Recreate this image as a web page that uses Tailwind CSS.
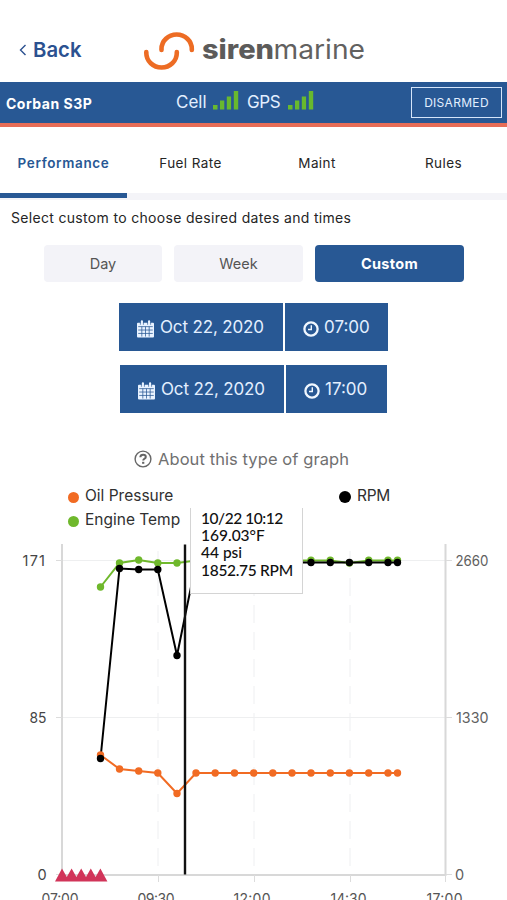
<!DOCTYPE html>
<html lang="en">
<head>
<meta charset="utf-8">
<title>Siren Marine</title>
<script src="https://cdn.jsdelivr.net/npm/@tailwindcss/browser@4"></script>
</head>
<body class="bg-white font-['Inter',sans-serif] overflow-hidden">
<svg class="hidden">
  <symbol id="cal" viewBox="0 0 18 19"><path fill="#e8f2ff" d="M1 3h3V1.5a1.2 1.2 0 0 1 2.4 0V3h5.2V1.5a1.2 1.2 0 0 1 2.4 0V3h3a1 1 0 0 1 1 1v13.500a1 1 0 0 1-1 1H1a1 1 0 0 1-1-1V4a1 1 0 0 1 1-1z"/><path stroke="#285894" stroke-width=".8" d="M1.300 7h15.400M1.300 10.600h15.400M1.300 14.200h15.400M5.100 7v10.500M9 7v10.500M12.900 7v10.500" fill="none"/><path stroke="#285894" stroke-width=".7" d="M3.600 2v3M6.800 2v3M11.200 2v3M14.400 2v3"/></symbol>
  <symbol id="clock" viewBox="0 0 16 16"><circle cx="8" cy="8" r="6.600" fill="none" stroke="#f0f7ff" stroke-width="2.300"/><path d="M8.300 4.200v4.300H5" fill="none" stroke="#f0f7ff" stroke-width="1.400"/></symbol>
  <symbol id="sig" viewBox="0 0 26 19"><path fill="#68b92e" d="M0 14h4.500v4.500H0zM7 9.500h4.300v9H7zM13.800 5.500h4.300v13h-4.300zM20.800 0h4.400v18.500h-4.400z"/></symbol>
</svg>
<div class="w-[507px] h-[900px] flex flex-col relative overflow-hidden">
  <header class="h-[82px] shrink-0 flex pl-[19px] text-[#2b5190]">
    <div class="w-[124px] flex items-center pt-[18px]">
      <svg class="w-[8px] h-[12px] mr-[6px]" viewBox="0 0 8 12" fill="none" stroke="#2b5190" stroke-width="1.400"><path d="M6.500 1 1.500 6l5 5"/></svg>
      <svg class="w-[52px] h-[28px]"><text x="0" y="21" font-size="20.500" font-weight="600" fill="#2b5190" textLength="48.500" lengthAdjust="spacingAndGlyphs">Back</text></svg>
    </div>
    <svg class="w-[230px] h-[82px]" viewBox="143 0 230 82">
      <g fill="none" stroke="#ed6c24" stroke-width="4.600" stroke-linecap="round"><path d="M146.300 52v1a15 14.300 0 0 0 30.500 0v-1"/><path d="M161.500 50v-1a15 14.300 0 0 1 30.300 0v1"/></g>
      <text x="202" y="58.500" font-size="26.500" font-weight="800" fill="#5c5b5a" textLength="72" lengthAdjust="spacingAndGlyphs">siren</text>
      <text x="273.500" y="58.500" font-size="26.500" font-weight="400" fill="#626160" textLength="91.500" lengthAdjust="spacingAndGlyphs">marine</text>
    </svg>
  </header>
  <div class="h-[45px] shrink-0 bg-[#285894] border-b-4 border-[#e76d57] flex items-center text-[#e3efff]">
    <div class="w-[176px] pl-[6px] pt-[1px] text-[14px] font-bold text-white tracking-[0.5px]">Corban S3P</div>
    <div class="w-[235px] flex items-center text-[17px]">
      <span class="w-[37px] pt-[1px]">Cell</span><svg class="w-[26px] h-[19px] -mt-[4px]"><use href="#sig"/></svg>
      <span class="w-[41px] ml-[8px] pt-[1px] tracking-[-0.4px]">GPS</span><svg class="w-[26px] h-[19px] -mt-[4px]"><use href="#sig"/></svg>
    </div>
    <div class="w-[91px] h-[31px] border border-[#d5e5fa] flex items-center justify-center text-[12px] tracking-[0.3px]">DISARMED</div>
  </div>
  <nav class="h-[73px] shrink-0 flex border-b-[7px] border-[#f4f4f8] text-[13.500px] text-[#252525] text-center leading-[72px] tracking-[0.4px]">
    <div class="w-[127px] h-[71px] border-b-[5px] border-[#285894] text-[#285894] font-semibold tracking-[0.65px]">Performance</div>
    <div class="w-[127px]">Fuel Rate</div>
    <div class="w-[126px]">Maint</div>
    <div class="w-[127px]">Rules</div>
  </nav>
  <p class="h-[45px] shrink-0 pl-[11px] leading-[35px] text-[14px] text-[#252525] tracking-[0.32px] whitespace-nowrap">Select custom to choose desired dates and times</p>
  <div class="shrink-0 flex gap-[12px] ml-[44px] h-[37px] text-[14.500px] leading-[37px] text-center text-[#555]">
    <div class="w-[118px] rounded bg-[#f3f3f8]">Day</div>
    <div class="w-[129px] rounded bg-[#f3f3f8]">Week</div>
    <div class="w-[149px] rounded bg-[#285894] text-white font-bold tracking-[0.3px]">Custom</div>
  </div>
  <div class="shrink-0 flex gap-[2px] ml-[119px] mt-[21px] h-[48px] text-[17px] text-[#e3efff] whitespace-nowrap">
    <div class="w-[164px] bg-[#285894] flex items-center pl-[18px] pt-[2px] tracking-[-0.15px]"><svg class="w-[17px] h-[18px] mr-[6px] mt-[2px]"><use href="#cal"/></svg>Oct 22, 2020</div>
    <div class="w-[103px] bg-[#285894] flex items-center pl-[18px] pt-[2px]"><svg class="w-[16px] h-[16px] mr-[5px] mt-[1px]"><use href="#clock"/></svg>07:00</div>
  </div>
  <div class="shrink-0 flex gap-[2px] ml-[120px] mt-[14px] h-[48px] text-[17px] text-[#e3efff] whitespace-nowrap">
    <div class="w-[164px] bg-[#285894] flex items-center pl-[18px] pt-[2px] tracking-[-0.15px]"><svg class="w-[17px] h-[18px] mr-[6px] mt-[2px]"><use href="#cal"/></svg>Oct 22, 2020</div>
    <div class="w-[101px] bg-[#285894] flex items-center pl-[18px] pt-[2px]"><svg class="w-[16px] h-[16px] mr-[5px] mt-[1px]"><use href="#clock"/></svg>17:00</div>
  </div>
  <div class="shrink-0 flex items-center h-[30px] mt-[31px] pl-[134px] text-[16.500px] text-[#707070] tracking-[0.08px] whitespace-nowrap">
    <svg class="w-[18px] h-[18px] mr-[6px]" viewBox="0 0 18 18" fill="none" stroke="#666"><circle cx="9" cy="9" r="7.900" stroke-width="1.400"/><path d="M6.300 7.200c.2-3.400 5.500-3.100 5.500-.3 0 1.800-2.600 2-2.600 3.600" stroke-width="2"/><path d="M8.100 12.800h2.200" stroke-width="2"/></svg>About this type of graph
  </div>
  <div class="shrink-0 h-[58px] pt-[10px] flex pl-[68px] text-[15.500px] leading-[24px] text-[#303030] whitespace-nowrap">
    <div class="w-[271px]">
      <div class="flex items-center"><span class="w-[11px] h-[11px] rounded-full bg-[#f16b23] mr-[6px] mt-[2px]"></span>Oil Pressure</div>
      <div class="flex items-center"><span class="w-[11px] h-[11px] rounded-full bg-[#6fb82c] mr-[6px] mt-[2px]"></span>Engine Temp</div>
    </div>
    <div class="flex items-center h-[24px]"><span class="w-[12px] h-[12px] rounded-full bg-black mr-[6px] mt-[2px]"></span><span class="tracking-[-0.3px]">RPM</span></div>
  </div>
  <svg class="shrink-0 w-[507px] h-[368px]" viewBox="0 532 507 368" fill="none">
    <path stroke="#eeeff0" d="M62 560.500h384M62 717.500h384"/>
    <path stroke="#eeeff1" stroke-dasharray="18 9" d="M158 551v323M254 551v323M350 551v323"/>
    <path stroke="#d8d8d8" stroke-width="2" d="M62 544v332M445.500 544v332M62 875h384"/>
    <path stroke="#dcdcdc" d="M56 560.500h6M56 717.500h6M56 874.500h6M446 560.500h6M446 717.500h6M446 874.500h6M158.500 875v7M254.500 875v7M350.500 875v7M445.500 875v7"/>
    <g stroke-width="2">
      <path stroke="#f16b23" d="M100.500 755 119.500 769 138.700 771 157.800 773 177 793.500 196 773 397.500 773"/>
      <path stroke="#6fb82c" d="M100.500 587 119.500 563 138.700 560 157.800 563 177 563 196 560.500 330 560.500 349.500 563 368.700 560.500 397.500 560.500"/>
      <path stroke="#000" d="M100.500 758.500 119.500 568.500 138.700 569.500 157.800 569.500 177 655.500 196 562.500 397.500 562.500"/>
    </g>
    <g stroke-width="7.400" stroke-linecap="round">
      <path stroke="#f16b23" d="M100.500 755h0M119.500 769h0M138.700 771h0M157.800 773h0M177 793.500h0M196 773h0M215.200 773h0M234.500 773h0M253.700 773h0M272.800 773h0M292 773h0M311 773h0M330.300 773h0M349.400 773h0M368.700 773h0M388 773h0M397.500 773h0"/>
      <path stroke="#6fb82c" d="M100.500 587h0M119.500 563h0M138.700 560h0M157.800 563h0M177 563h0M311 560.300h0M330.300 560.300h0M349.400 563h0M368.700 560.300h0M388 560.300h0M397.500 560.300h0"/>
      <path stroke="#000" d="M100.500 758.500h0M119.500 568.500h0M138.700 569.500h0M157.800 569.500h0M177 655.500h0M311 562.500h0M330.300 562.500h0M349.400 562.500h0M368.700 562.500h0M388 562.500h0M397.500 562.500h0"/>
    </g>
    <path stroke="#111" stroke-width="2.400" d="M185 544.500v330"/>
    <path fill="#d13459" d="m55 881.500 7-13 4.800 8.500 4.800-8.500 4.800 8.500 4.800-8.500 4.800 8.500 4.800-8.500 4.800 8.500 4.800-8.500 7 13z"/>
    <g font-size="14.500" fill="#454545">
      <text x="22.500" y="565.500" textLength="22.500">171</text><text x="29.500" y="722.500" textLength="17" lengthAdjust="spacingAndGlyphs">85</text><text x="37.500" y="879.500">0</text>
      <g fill="#606060"><text x="455.500" y="565.500" textLength="33" lengthAdjust="spacingAndGlyphs">2660</text><text x="456" y="722.500" textLength="32.500" lengthAdjust="spacingAndGlyphs">1330</text><text x="455" y="879.500">0</text></g>
      <g fill="#555" font-size="14" text-anchor="middle"><text x="60" y="903.500" textLength="37">07:00</text><text x="156" y="903.500" textLength="37">09:30</text><text x="252" y="903.500" textLength="37">12:00</text><text x="348.500" y="903.500" textLength="36">14:30</text><text x="444.500" y="903.500" textLength="36">17:00</text></g>
    </g>
  </svg>
  <div class="absolute left-[190px] top-[508px] w-[113px] h-[86px] bg-white border border-t-0 border-[#d4d4d4] pl-[10px] pt-[2px] font-['Lato',sans-serif] font-medium text-[15.500px] leading-[17.200px] text-[#111] whitespace-nowrap">
    <div class="tracking-[-0.45px]">10/22 10:12</div><div>169.03°F</div><div>44 psi</div><div class="tracking-[-0.3px]">1852.75 RPM</div>
  </div>
</div>
</body>
</html>
